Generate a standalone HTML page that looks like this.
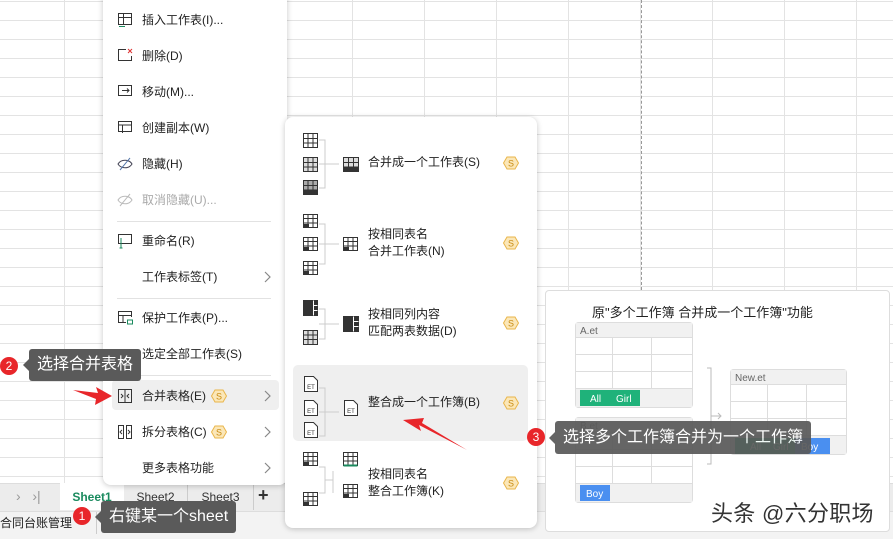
<!DOCTYPE html>
<html><head><meta charset="utf-8"><style>
*{margin:0;padding:0;box-sizing:border-box}
body{width:893px;height:539px;overflow:hidden;position:relative;background:#fff;font-family:"Liberation Sans","Noto Sans CJK SC",sans-serif;font-size:12px;color:#222}
.grid{position:absolute;left:0;top:0;width:893px;height:483px;
background-image:linear-gradient(to right,#e3e3e3 1px,transparent 1px),linear-gradient(to bottom,#e3e3e3 1px,transparent 1px);
background-size:72px 19px;background-position:64px 1px}
.abs{position:absolute}
.menu{position:absolute;background:#fff;border-radius:8px;box-shadow:0 1px 6px rgba(0,0,0,.22)}
.it{position:absolute;left:14px;height:20px;line-height:20px;font-size:12px;color:#222}
.it .t{position:absolute;left:25px;white-space:nowrap}
.it svg{position:absolute;left:0;top:2px}
.sep{position:absolute;left:14px;width:154px;height:1px;background:#e2e2e2}
.it svg.chev{left:146px;top:4px}
.tip{position:absolute;background:#5a5a5a;color:#fff;font-size:16px;border-radius:3px;white-space:nowrap;padding:0 8px}
.tip:before{content:"";position:absolute;left:-6px;top:50%;margin-top:-6px;border:6px solid transparent;border-left:0;border-right-color:#5a5a5a}
.dot{position:absolute;width:18px;height:18px;border-radius:50%;background:#e8262a;color:#fff;font-size:12px;text-align:center;line-height:18px}
.vip{position:absolute;width:16px;height:14px}
.sub .lbl{position:absolute;left:83px;font-size:12px;line-height:17px;color:#222;white-space:nowrap}
</style></head><body>
<div class="grid"></div>
<div class="abs" style="left:641px;top:0;height:290px;border-left:1px dashed #999"></div>

<!-- tab bar -->
<div class="abs" style="left:0;top:483px;width:893px;height:28px;background:#ececec;border-top:1px solid #ddd"></div>
<div class="abs" style="left:16px;top:488px;color:#999;font-size:14px">›&nbsp;&nbsp;&nbsp;›|</div>
<div class="abs" style="left:60px;top:483px;width:64px;height:27px;background:#fff;color:#1a8a5e;font-weight:bold;text-align:center;line-height:28px;font-size:12px">Sheet1</div>
<div class="abs" style="left:124px;top:483px;width:64px;height:27px;line-height:28px;text-align:center;color:#333;border-right:1px solid #ccc">Sheet2</div>
<div class="abs" style="left:188px;top:483px;width:66px;height:27px;line-height:28px;text-align:center;color:#333;border-right:1px solid #ccc">Sheet3</div>
<div class="abs" style="left:258px;top:485px;font-size:18px;font-weight:bold;color:#333">+</div>
<div class="abs" style="left:0;top:511px;width:893px;height:28px;background:#f3f3f3;border-top:1px solid #ddd"></div>
<div class="abs" style="left:0;top:514px;font-size:12px;color:#222">合同台账管理</div>
<div class="abs" style="left:96px;top:512px;height:22px;border-left:1px solid #ccc"></div>

<!-- main menu -->
<div class="menu" style="left:103px;top:-8px;width:184px;height:493px">
 <div class="it" style="top:18px"><svg width="16" height="16" viewBox="0 0 16 16" fill="none" stroke="#333"><rect x="1.5" y="1.5" width="13" height="11"/><path d="M1.5 5.5h13M6.5 1.5v11"/><path d="M2 14.5h6" stroke="#1a8a5e"/></svg><span class="t">插入工作表(I)...</span></div>
 <div class="it" style="top:54px"><svg width="16" height="16" viewBox="0 0 16 16" fill="none" stroke="#333"><path d="M9 1.5H1.5v11h13V8"/><path d="M11 1l4 4M15 1l-4 4" stroke="#d33"/></svg><span class="t">删除(D)</span></div>
 <div class="it" style="top:90px"><svg width="16" height="16" viewBox="0 0 16 16" fill="none" stroke="#333"><rect x="1.5" y="1.5" width="13" height="10"/><path d="M5 6.5h7M10 4.5l2 2-2 2"/></svg><span class="t">移动(M)...</span></div>
 <div class="it" style="top:126px"><svg width="16" height="16" viewBox="0 0 16 16" fill="none" stroke="#333"><rect x="1.5" y="1.5" width="13" height="10"/><path d="M1.5 5h13M5.5 5v8"/></svg><span class="t">创建副本(W)</span></div>
 <div class="it" style="top:162px"><svg width="16" height="16" viewBox="0 0 16 16" fill="none" stroke="#445"><path d="M1 8c3-5 11-5 14 0-3 5-11 5-14 0z"/><path d="M3 14L13 2" stroke="#57a"/></svg><span class="t">隐藏(H)</span></div>
 <div class="it" style="top:198px;color:#aaa"><svg width="16" height="16" viewBox="0 0 16 16" fill="none" stroke="#bbb"><path d="M1 8c3-5 11-5 14 0-3 5-11 5-14 0z"/><path d="M3 14L13 2"/></svg><span class="t">取消隐藏(U)...</span></div>
 <div class="sep" style="top:229px"></div>
 <div class="it" style="top:239px"><svg width="16" height="16" viewBox="0 0 16 16" fill="none" stroke="#333"><rect x="1.5" y="1.5" width="13" height="9"/><path d="M4 5v10M2.5 15h3" stroke="#1a8a5e"/></svg><span class="t">重命名(R)</span></div>
 <div class="it" style="top:275px"><span class="t">工作表标签(T)</span><svg class="chev" width="8" height="12" viewBox="0 0 8 12" fill="none" stroke="#888" stroke-width="1.2"><path d="M2 1l5 5-5 5"/></svg></div>
 <div class="sep" style="top:306px"></div>
 <div class="it" style="top:316px"><svg width="16" height="16" viewBox="0 0 16 16" fill="none" stroke="#333"><path d="M9 12.5H1.5v-11h13V7M1.5 5.5h13M6 5.5v7"/><rect x="10.5" y="10" width="5" height="4" stroke="#1a8a5e"/></svg><span class="t">保护工作表(P)...</span></div>
 <div class="it" style="top:352px"><span class="t">选定全部工作表(S)</span></div>
 <div class="sep" style="top:383px"></div>
 <div class="abs" style="left:9px;top:388px;width:167px;height:30px;background:#efefef;border-radius:4px"></div>
 <div class="it" style="top:394px"><svg width="16" height="16" viewBox="0 0 16 16" fill="none" stroke="#333"><rect x="1.5" y="1.5" width="13" height="13"/><path d="M8 1.5v13M4 6l2 2-2 2M12 6l-2 2 2 2"/></svg><span class="t">合并表格(E)</span><svg class="chev" width="8" height="12" viewBox="0 0 8 12" fill="none" stroke="#888" stroke-width="1.2"><path d="M2 1l5 5-5 5"/></svg></div>
 <div class="it" style="top:430px"><svg width="16" height="16" viewBox="0 0 16 16" fill="none" stroke="#333"><rect x="1.5" y="1.5" width="5" height="13"/><rect x="9.5" y="1.5" width="5" height="13"/><path d="M5 6L3 8l2 2M11 6l2 2-2 2"/></svg><span class="t">拆分表格(C)</span><svg class="chev" width="8" height="12" viewBox="0 0 8 12" fill="none" stroke="#888" stroke-width="1.2"><path d="M2 1l5 5-5 5"/></svg></div>
 <div class="it" style="top:466px"><span class="t">更多表格功能</span><svg class="chev" width="8" height="12" viewBox="0 0 8 12" fill="none" stroke="#888" stroke-width="1.2"><path d="M2 1l5 5-5 5"/></svg></div>
 <svg class="vip" style="left:108px;top:397px" viewBox="0 0 16 14"><path d="M4 1h8l3.5 6-3.5 6H4L0.5 7z" fill="#fbe7b8" stroke="#e9b54a"/><text x="8" y="10.5" font-size="9" text-anchor="middle" fill="#c98a10" font-family="Liberation Sans">S</text></svg>
 <svg class="vip" style="left:108px;top:433px" viewBox="0 0 16 14"><path d="M4 1h8l3.5 6-3.5 6H4L0.5 7z" fill="#fbe7b8" stroke="#e9b54a"/><text x="8" y="10.5" font-size="9" text-anchor="middle" fill="#c98a10" font-family="Liberation Sans">S</text></svg>
</div>

<!-- submenu -->
<div class="menu sub" style="left:285px;top:117px;width:252px;height:411px">
 <div class="abs" style="left:8px;top:248px;width:235px;height:76px;background:#efefef;border-radius:5px"></div>
 <svg class="abs" style="left:0;top:0" width="100" height="411" viewBox="0 0 100 411" fill="none" stroke="#333">
  <g stroke="#ccc"><path d="M34 23h6v48h-6M34 47h20M34 107h6v40h-6M34 127h20M34 192h6v30h-6M34 207h20M34 271h6v48h-6M34 295h20M34 350h6v26h-6M40 363h8M48 354v22"/></g>
  <g><rect x="18.5" y="16.5" width="14" height="14"/><path d="M18.5 21.5h14M18.5 26h14M23 16.5v14M28 16.5v14"/></g>
  <g><rect x="18.5" y="40.5" width="14" height="14" fill="#ddd"/><path d="M18.5 45.5h14M18.5 50h14M23 40.5v14M28 40.5v14"/></g>
  <g><rect x="18.5" y="63.5" width="14" height="14" fill="#aaa"/><rect x="18.5" y="73" width="14" height="4.5" fill="#333"/><path d="M18.5 68.5h14M23 63.5v10M28 63.5v10"/></g>
  <g><rect x="58.5" y="40.5" width="15" height="14" fill="#ddd"/><rect x="58.5" y="50" width="15" height="4.5" fill="#333"/><path d="M58.5 45.5h15M63.5 40.5v10M68.5 40.5v10"/></g>
  <g id="g2"><rect x="18.5" y="97.5" width="14" height="13"/><path d="M18.5 101.5h14M18.5 106h14M23 97.5v13M28 97.5v13"/><rect x="18.5" y="107.5" width="5" height="3" fill="#333"/></g>
  <use href="#g2" y="23"/><use href="#g2" y="47"/><use href="#g2" x="40" y="23"/>
  <g><rect x="18.5" y="183.5" width="14" height="15" fill="#333"/><path d="M28.5 183.5v15M28.5 188.5h4M28.5 193.5h4" stroke="#fff"/></g>
  <g><rect x="18.5" y="213.5" width="14" height="14" fill="#ddd"/><path d="M18.5 218h14M18.5 222.5h14M23 213.5v14M28 213.5v14"/></g>
  <g><rect x="58.5" y="199.5" width="15" height="15" fill="#333"/><path d="M68.5 199.5v15M68.5 204.5h5M68.5 209.5h5" stroke="#fff"/></g>
  <g id="et"><path d="M19.5 259.5h9l4 4v11h-13z" fill="#fff"/><text x="26" y="272" font-size="6" text-anchor="middle" fill="#333" stroke="none" font-family="Liberation Sans">ET</text></g>
  <use href="#et" y="24"/><use href="#et" y="46"/><use href="#et" x="40" y="24"/>
  <use href="#g2" y="238"/><use href="#g2" y="278"/>
  <g><rect x="58.5" y="335.5" width="14" height="13"/><path d="M58.5 339.5h14M58.5 344h14M63 335.5v13M68 335.5v13"/><path d="M58.5 348.5h14" stroke="#1a8a5e" stroke-width="2"/></g>
  <use href="#g2" x="40" y="270"/>
 </svg>
 <div class="lbl" style="top:37px">合并成一个工作表(S)</div>
 <div class="lbl" style="top:109px">按相同表名<br>合并工作表(N)</div>
 <div class="lbl" style="top:189px">按相同列内容<br>匹配两表数据(D)</div>
 <div class="lbl" style="top:277px">整合成一个工作簿(B)</div>
 <div class="lbl" style="top:349px">按相同表名<br>整合工作簿(K)</div>
 <svg class="vip" style="left:218px;top:39px" viewBox="0 0 16 14"><path d="M4 1h8l3.5 6-3.5 6H4L0.5 7z" fill="#fbe7b8" stroke="#e9b54a"/><text x="8" y="10.5" font-size="9" text-anchor="middle" fill="#c98a10" font-family="Liberation Sans">S</text></svg>
 <svg class="vip" style="left:218px;top:119px" viewBox="0 0 16 14"><path d="M4 1h8l3.5 6-3.5 6H4L0.5 7z" fill="#fbe7b8" stroke="#e9b54a"/><text x="8" y="10.5" font-size="9" text-anchor="middle" fill="#c98a10" font-family="Liberation Sans">S</text></svg>
 <svg class="vip" style="left:218px;top:199px" viewBox="0 0 16 14"><path d="M4 1h8l3.5 6-3.5 6H4L0.5 7z" fill="#fbe7b8" stroke="#e9b54a"/><text x="8" y="10.5" font-size="9" text-anchor="middle" fill="#c98a10" font-family="Liberation Sans">S</text></svg>
 <svg class="vip" style="left:218px;top:279px" viewBox="0 0 16 14"><path d="M4 1h8l3.5 6-3.5 6H4L0.5 7z" fill="#fbe7b8" stroke="#e9b54a"/><text x="8" y="10.5" font-size="9" text-anchor="middle" fill="#c98a10" font-family="Liberation Sans">S</text></svg>
 <svg class="vip" style="left:218px;top:359px" viewBox="0 0 16 14"><path d="M4 1h8l3.5 6-3.5 6H4L0.5 7z" fill="#fbe7b8" stroke="#e9b54a"/><text x="8" y="10.5" font-size="9" text-anchor="middle" fill="#c98a10" font-family="Liberation Sans">S</text></svg>
</div>

<!-- preview panel -->
<div class="abs" style="left:545px;top:290px;width:345px;height:242px;background:#fff;border:1px solid #ddd;border-radius:4px"></div>
<div class="abs" style="left:592px;top:302px;font-size:13px;color:#222">原"多个工作簿 合并成一个工作簿"功能</div>
<svg class="abs" style="left:545px;top:290px" width="345" height="242" viewBox="0 0 345 242" fill="none">
 <g stroke="#ddd">
  <rect x="30.5" y="32.5" width="117" height="85" rx="3" fill="#fff"/>
  <rect x="31" y="33" width="116" height="14" fill="#f1f1f1" stroke="none"/>
  <path d="M30.5 47.5h117M30.5 64.5h117M30.5 81.5h117M30.5 98.5h117M67.5 47.5v51M106.5 47.5v51"/>
  <rect x="31" y="99" width="116" height="18" fill="#f1f1f1" stroke="none"/>
  <rect x="30.5" y="127.5" width="117" height="85" rx="3" fill="#fff"/>
  <rect x="31" y="128" width="116" height="14" fill="#f1f1f1" stroke="none"/>
  <path d="M30.5 142.5h117M30.5 159.5h117M30.5 176.5h117M30.5 193.5h117M67.5 142.5v51M106.5 142.5v51"/>
  <rect x="31" y="194" width="116" height="18" fill="#f1f1f1" stroke="none"/>
  <rect x="185.5" y="79.5" width="116" height="85" rx="3" fill="#fff"/>
  <rect x="186" y="80" width="115" height="14" fill="#f1f1f1" stroke="none"/>
  <path d="M185.5 94.5h116M185.5 111.5h116M185.5 128.5h116M185.5 145.5h116M222.5 94.5v51M261.5 94.5v51"/>
  <rect x="186" y="146" width="115" height="18" fill="#f1f1f1" stroke="none"/>
 </g>
 <path d="M162 78h4v96h-4M166 126h10M173 123l3 3-3 3" stroke="#bbb"/>
 <rect x="35" y="100" width="60" height="16" fill="#1fb27a"/>
 <text x="45" y="112" font-size="10" fill="#fff" font-family="Liberation Sans">All</text>
 <text x="71" y="112" font-size="10" fill="#fff" font-family="Liberation Sans">Girl</text>
 <rect x="35" y="195" width="30" height="16" fill="#4a8ff0"/>
 <text x="41" y="207" font-size="10" fill="#fff" font-family="Liberation Sans">Boy</text>
 <rect x="190" y="148" width="95" height="16" fill="#1fb27a"/>
 <rect x="250" y="148" width="35" height="16" fill="#4a8ff0"/>
 <text x="205" y="160" font-size="10" fill="#fff" font-family="Liberation Sans">All</text>
 <text x="228" y="160" font-size="10" fill="#fff" font-family="Liberation Sans">Girl</text>
 <text x="256" y="160" font-size="10" fill="#fff" font-family="Liberation Sans">Boy</text>
 <text x="35" y="44" font-size="10" fill="#666" font-family="Liberation Sans">A.et</text>
 <text x="35" y="139" font-size="10" fill="#666" font-family="Liberation Sans">B.et</text>
 <text x="190" y="91" font-size="10" fill="#666" font-family="Liberation Sans">New.et</text>
</svg>
<div class="abs" style="left:711px;top:496px;font-size:22px;color:#333;letter-spacing:0.3px">头条 @六分职场</div>

<!-- arrows -->
<svg class="abs" style="left:0;top:0" width="893" height="539" viewBox="0 0 893 539">
 <path d="M73 390L98 393L96 387L112 396L95 405L96 399Z" fill="#e8262a"/>
 <path d="M467 450L419 425L421 431L403 420L424 418L422 423Z" fill="#e8262a"/>
</svg>

<!-- tooltips -->
<div class="dot" style="left:0;top:357px">2</div>
<div class="tip" style="left:29px;top:349px;height:32px;line-height:32px">选择合并表格</div>
<div class="dot" style="left:73px;top:507px">1</div>
<div class="tip" style="left:101px;top:501px;height:32px;line-height:32px">右键某一个sheet</div>
<div class="dot" style="left:527px;top:428px">3</div>
<div class="tip" style="left:555px;top:421px;height:33px;line-height:33px;opacity:.93">选择多个工作簿合并为一个工作簿</div>
</body></html>
